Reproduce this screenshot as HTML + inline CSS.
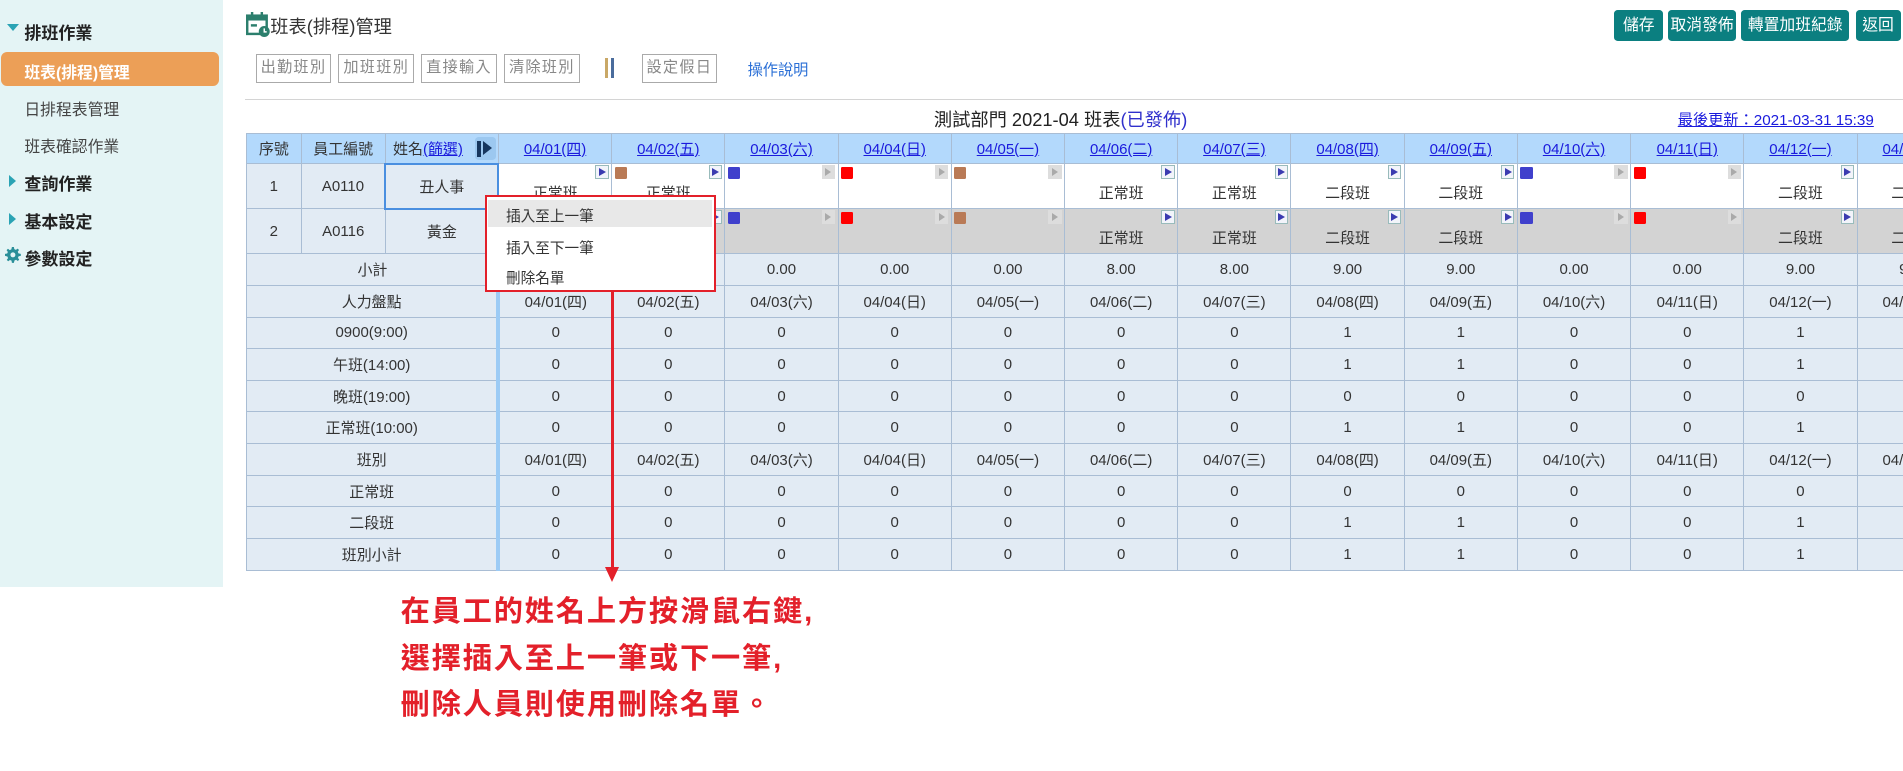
<!DOCTYPE html>
<html><head><meta charset="utf-8">
<style>
*{box-sizing:border-box;margin:0;padding:0}
html,body{width:1903px;height:771px;overflow:hidden;background:#fff}
body{font-family:"Liberation Sans","Noto Sans CJK TC",sans-serif;color:#333}
#w{position:relative;width:1563px;height:633px;zoom:1.21753;overflow:hidden}
.abs{position:absolute}
#side{left:0;top:0;width:183px;height:482px;background:#e4f4f5}
.si{position:absolute;left:20px;font-size:13px;color:#444}
.sh{position:absolute;left:20px;font-size:14px;font-weight:bold;color:#222}
.tri{position:absolute;left:7px;width:0;height:0;border-top:5px solid transparent;border-bottom:5px solid transparent;border-left:6px solid #2aa3b4}
.btn{position:absolute;top:44px;height:24px;border:1px solid #aaa;background:#fff;color:#888;font-size:12.5px;line-height:22px;text-align:center;letter-spacing:1px}
.tb{position:absolute;top:8px;height:26px;background:#0b7f80;color:#fff;border-radius:3px;font-size:13px;line-height:26px;text-align:center}
#tw{position:absolute;left:202px;top:109px;width:1361px;overflow:hidden}
table{border-collapse:collapse;table-layout:fixed;width:1416px;font-size:12.3px}
td{border:1px solid #a9bdd4;text-align:center;color:#333;overflow:hidden;white-space:nowrap}
tr.h td{background:#b3d9fc;height:25px}
tr.h a{color:#1a1add;text-decoration:underline}
.l{background:#e2ebf4}
.b td{background:#b3d9fc}
.r{height:26px}
.r td{background:#e2ebf4}
.c{position:relative;height:37px;background:#fff;vertical-align:bottom;padding-bottom:4px}
.g .c{background:#d3d3d3}
.sq{position:absolute;left:2px;top:2px;width:10px;height:10px;border-radius:1px}
.fl{position:absolute;right:2px;top:1px;width:11px;height:11px;border:1px solid #9bb;background:#f2f4fa}
.fl:after{content:"";position:absolute;left:2px;top:1px;border-top:4px solid transparent;border-bottom:4px solid transparent;border-left:6px solid #3b3bb0}
.fg{position:absolute;right:2px;top:1px;width:11px;height:11px;background:#ddd}
.fg:after{content:"";position:absolute;left:3px;top:2px;border-top:3.5px solid transparent;border-bottom:3.5px solid transparent;border-left:5px solid #aaa}
.vb{border-left:4px solid #9ccbf5 !important}
</style></head><body><div id="w">
<div id="side" class="abs">
<div class="tri" style="top:20px;left:6px;border-left:5px solid transparent;border-right:5px solid transparent;border-top:6px solid #2aa3b4;border-bottom:0"></div>
<div class="sh" style="top:16px">排班作業</div>
<div class="abs" style="left:1px;top:43px;width:179px;height:28px;background:#ec9f57;border-radius:5px"></div>
<div class="sh" style="top:49px;font-size:13px;color:#fff">班表(排程)管理</div>
<div class="si" style="top:80px">日排程表管理</div>
<div class="si" style="top:110px">班表確認作業</div>
<div class="tri" style="top:144px"></div><div class="sh" style="top:140px">查詢作業</div>
<div class="tri" style="top:175px"></div><div class="sh" style="top:171px">基本設定</div>
<svg class="abs" style="left:4px;top:203px" width="13" height="13" viewBox="0 0 16 16"><path fill="#2a8f99" d="M7 0h2l.4 2.2 1.6.7 1.8-1.3 1.4 1.4-1.3 1.8.7 1.6L16 7v2l-2.2.4-.7 1.6 1.3 1.8-1.4 1.4-1.8-1.3-1.6.7L9 16H7l-.4-2.2-1.6-.7-1.8 1.3-1.4-1.4 1.3-1.8-.7-1.6L0 9V7l2.2-.4.7-1.6-1.3-1.8 1.4-1.4 1.800 1.3 1.6-.7z"/><circle cx="8" cy="8" r="2.5" fill="#e4f4f5"/></svg>
<div class="sh" style="top:201px">參數設定</div>
</div>
<svg class="abs" style="left:202px;top:10px" width="20" height="21" viewBox="0 0 20 21"><rect x="1" y="3" width="16" height="15" fill="none" stroke="#2c7f6d" stroke-width="2"/><rect x="1" y="3" width="16" height="4" fill="#2c7f6d"/><rect x="4" y="0" width="2" height="4" fill="#2c7f6d"/><rect x="12" y="0" width="2" height="4" fill="#2c7f6d"/><rect x="4" y="10" width="5" height="2" fill="#2c7f6d"/><circle cx="15" cy="16" r="4.5" fill="#2c7f6d"/><path d="M15 13.5v2.8h2" stroke="#fff" stroke-width="1.2" fill="none"/></svg>
<div class="abs" style="left:222px;top:11px;font-size:15px;color:#333">班表(排程)管理</div>
<div class="btn" style="left:210px;width:62px">出勤班別</div>
<div class="btn" style="left:278px;width:62px">加班班別</div>
<div class="btn" style="left:346px;width:62px">直接輸入</div>
<div class="btn" style="left:414px;width:62px">清除班別</div>
<div class="abs" style="left:497px;top:48px;width:2px;height:16px;background:#c9a867"></div>
<div class="abs" style="left:502px;top:48px;width:2px;height:16px;background:#4a6c9c"></div>
<div class="btn" style="left:527px;width:62px">設定假日</div>
<div class="abs" style="left:614px;top:48px;font-size:12.5px;color:#2a6fd6">操作說明</div>
<div class="tb" style="left:1326px;width:40px">儲存</div>
<div class="tb" style="left:1370px;width:56px">取消發佈</div>
<div class="tb" style="left:1430px;width:89px">轉置加班紀錄</div>
<div class="tb" style="left:1524px;width:37px">返回</div>
<div class="abs" style="left:201px;top:81px;width:1362px;height:1px;background:#d4d4d4"></div>
<div class="abs" style="left:767px;top:87px;font-size:15px;color:#222">測試部門 2021-04 班表<span style="color:#3030cc">(已發佈)</span></div>
<div class="abs" style="left:1378px;top:89px;font-size:12.5px;color:#1a1add;text-decoration:underline">最後更新：2021-03-31 15:39</div>
<div id="tw"><table>
<colgroup><col style="width:45px"><col style="width:69px"><col style="width:93px"><col style="width:93px"><col style="width:93px"><col style="width:93px"><col style="width:93px"><col style="width:93px"><col style="width:93px"><col style="width:93px"><col style="width:93px"><col style="width:93px"><col style="width:93px"><col style="width:93px"><col style="width:93px"><col style="width:93px"></colgroup>
<tr class="h"><td>序號</td><td>員工編號</td><td style="text-align:left;padding-left:6px;position:relative">姓名<a>(篩選)</a><span style="position:absolute;right:2px;top:3px;width:17px;height:19px;background:#9cc8f0;border-radius:3px"><span style="position:absolute;left:2px;top:3px;width:3px;height:13px;background:#16365e"></span><span style="position:absolute;left:7px;top:3px;border-top:6.5px solid transparent;border-bottom:6.5px solid transparent;border-left:8px solid #16365e"></span></span></td><td><a>04/01(四)</a></td><td><a>04/02(五)</a></td><td><a>04/03(六)</a></td><td><a>04/04(日)</a></td><td><a>04/05(一)</a></td><td><a>04/06(二)</a></td><td><a>04/07(三)</a></td><td><a>04/08(四)</a></td><td><a>04/09(五)</a></td><td><a>04/10(六)</a></td><td><a>04/11(日)</a></td><td><a>04/12(一)</a></td><td><a>04/13(二)</a></td></tr>
<tr><td class="l">1</td><td class="l">A0110</td><td class="l" style="border:2px solid #4a8fe0">丑人事</td><td class="c"><i class="fl"></i>正常班</td><td class="c"><i class="sq" style="background:#b97a56"></i><i class="fl"></i>正常班</td><td class="c"><i class="sq" style="background:#4040cc"></i><i class="fg"></i></td><td class="c"><i class="sq" style="background:#f00"></i><i class="fg"></i></td><td class="c"><i class="sq" style="background:#b97a56"></i><i class="fg"></i></td><td class="c"><i class="fl"></i>正常班</td><td class="c"><i class="fl"></i>正常班</td><td class="c"><i class="fl"></i>二段班</td><td class="c"><i class="fl"></i>二段班</td><td class="c"><i class="sq" style="background:#4040cc"></i><i class="fg"></i></td><td class="c"><i class="sq" style="background:#f00"></i><i class="fg"></i></td><td class="c"><i class="fl"></i>二段班</td><td class="c"><i class="fl"></i>二段班</td></tr>
<tr class="g"><td class="l">2</td><td class="l">A0116</td><td class="l">黃金</td><td class="c"><i class="fl"></i>正常班</td><td class="c"><i class="sq" style="background:#b97a56"></i><i class="fl"></i>正常班</td><td class="c"><i class="sq" style="background:#4040cc"></i><i class="fg"></i></td><td class="c"><i class="sq" style="background:#f00"></i><i class="fg"></i></td><td class="c"><i class="sq" style="background:#b97a56"></i><i class="fg"></i></td><td class="c"><i class="fl"></i>正常班</td><td class="c"><i class="fl"></i>正常班</td><td class="c"><i class="fl"></i>二段班</td><td class="c"><i class="fl"></i>二段班</td><td class="c"><i class="sq" style="background:#4040cc"></i><i class="fg"></i></td><td class="c"><i class="sq" style="background:#f00"></i><i class="fg"></i></td><td class="c"><i class="fl"></i>二段班</td><td class="c"><i class="fl"></i>二段班</td></tr>
<tr class="r"><td colspan="3">小計</td><td>8.00</td><td>8.00</td><td>0.00</td><td>0.00</td><td>0.00</td><td>8.00</td><td>8.00</td><td>9.00</td><td>9.00</td><td>0.00</td><td>0.00</td><td>9.00</td><td>9.00</td></tr>
<tr class="r b"><td colspan="3">人力盤點</td><td class="vb">04/01(四)</td><td>04/02(五)</td><td>04/03(六)</td><td>04/04(日)</td><td>04/05(一)</td><td>04/06(二)</td><td>04/07(三)</td><td>04/08(四)</td><td>04/09(五)</td><td>04/10(六)</td><td>04/11(日)</td><td>04/12(一)</td><td>04/13(二)</td></tr>
<tr class="r"><td colspan="3">0900(9:00)</td><td class="vb">0</td><td>0</td><td>0</td><td>0</td><td>0</td><td>0</td><td>0</td><td>1</td><td>1</td><td>0</td><td>0</td><td>1</td><td>1</td></tr>
<tr class="r"><td colspan="3">午班(14:00)</td><td class="vb">0</td><td>0</td><td>0</td><td>0</td><td>0</td><td>0</td><td>0</td><td>1</td><td>1</td><td>0</td><td>0</td><td>1</td><td>1</td></tr>
<tr class="r"><td colspan="3">晚班(19:00)</td><td class="vb">0</td><td>0</td><td>0</td><td>0</td><td>0</td><td>0</td><td>0</td><td>0</td><td>0</td><td>0</td><td>0</td><td>0</td><td>0</td></tr>
<tr class="r"><td colspan="3">正常班(10:00)</td><td class="vb">0</td><td>0</td><td>0</td><td>0</td><td>0</td><td>0</td><td>0</td><td>1</td><td>1</td><td>0</td><td>0</td><td>1</td><td>1</td></tr>
<tr class="r b"><td colspan="3">班別</td><td class="vb">04/01(四)</td><td>04/02(五)</td><td>04/03(六)</td><td>04/04(日)</td><td>04/05(一)</td><td>04/06(二)</td><td>04/07(三)</td><td>04/08(四)</td><td>04/09(五)</td><td>04/10(六)</td><td>04/11(日)</td><td>04/12(一)</td><td>04/13(二)</td></tr>
<tr class="r"><td colspan="3">正常班</td><td class="vb">0</td><td>0</td><td>0</td><td>0</td><td>0</td><td>0</td><td>0</td><td>0</td><td>0</td><td>0</td><td>0</td><td>0</td><td>0</td></tr>
<tr class="r"><td colspan="3">二段班</td><td class="vb">0</td><td>0</td><td>0</td><td>0</td><td>0</td><td>0</td><td>0</td><td>1</td><td>1</td><td>0</td><td>0</td><td>1</td><td>1</td></tr>
<tr class="r"><td colspan="3">班別小計</td><td class="vb">0</td><td>0</td><td>0</td><td>0</td><td>0</td><td>0</td><td>0</td><td>1</td><td>1</td><td>0</td><td>0</td><td>1</td><td>1</td></tr>
</table></div>
<div class="abs" style="left:398px;top:160px;width:190px;height:80px;border:2px solid #e3202a;background:#fff;font-size:12px;color:#333">
<div style="position:absolute;left:1px;top:3px;width:184px;height:22px;background:#e8e8e8"></div>
<div style="position:absolute;left:16px;top:7px">插入至上一筆</div>
<div style="position:absolute;left:16px;top:33px">插入至下一筆</div>
<div style="position:absolute;left:16px;top:58px">刪除名單</div>
</div>
<div class="abs" style="left:502px;top:240px;width:2px;height:230px;background:#e3202a"></div>
<div class="abs" style="left:497px;top:466px;border-left:6px solid transparent;border-right:6px solid transparent;border-top:13px solid #e3202a"></div>
<div class="abs" style="left:329px;top:484px;font-size:24px;font-weight:bold;color:#e3202a;line-height:38px;letter-spacing:1.5px">在員工的姓名上方按滑鼠右鍵,<br>選擇插入至上一筆或下一筆,<br>刪除人員則使用刪除名單。</div>
</div></body></html>
